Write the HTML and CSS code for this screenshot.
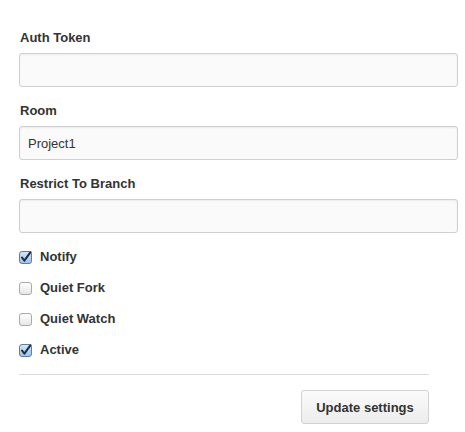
FILE: index.html
```html
<!DOCTYPE html>
<html>
<head>
<meta charset="utf-8">
<link rel="stylesheet" href="styles.css">
</head>
<body>
<form class="settings">
  <div class="field">
    <label class="field-label">Auth Token</label>
    <input class="text-input" type="text" value="">
  </div>
  <div class="field">
    <label class="field-label">Room</label>
    <input class="text-input" type="text" value="Project1">
  </div>
  <div class="field">
    <label class="field-label">Restrict To Branch</label>
    <input class="text-input" type="text" value="">
  </div>
  <div class="checks">
    <div class="check-row">
      <svg class="box" width="13" height="13" viewBox="0 0 13 13">
        <defs><linearGradient id="gb" x1="0" y1="0" x2="0" y2="1"><stop offset="0" stop-color="#d6e6f7"/><stop offset="1" stop-color="#9cc3ea"/></linearGradient></defs>
        <rect x="0.5" y="0.5" width="12" height="12" rx="2.5" fill="url(#gb)" stroke="#5e7fa3"/>
        <path d="M3 6.5 L5.4 9.6 L11.5 1.2" fill="none" stroke="#1e2b44" stroke-width="2" stroke-linecap="round" stroke-linejoin="round"/>
      </svg>
      <span class="check-label">Notify</span>
    </div>
    <div class="check-row">
      <svg class="box" width="13" height="13" viewBox="0 0 13 13">
        <defs><linearGradient id="gg" x1="0" y1="0" x2="0" y2="1"><stop offset="0" stop-color="#ffffff"/><stop offset="1" stop-color="#e6e6e6"/></linearGradient></defs>
        <rect x="0.5" y="0.5" width="12" height="12" rx="2.5" fill="url(#gg)" stroke="#a9a9a9"/>
      </svg>
      <span class="check-label">Quiet Fork</span>
    </div>
    <div class="check-row">
      <svg class="box" width="13" height="13" viewBox="0 0 13 13">
        <rect x="0.5" y="0.5" width="12" height="12" rx="2.5" fill="url(#gg)" stroke="#a9a9a9"/>
      </svg>
      <span class="check-label">Quiet Watch</span>
    </div>
    <div class="check-row">
      <svg class="box" width="13" height="13" viewBox="0 0 13 13">
        <rect x="0.5" y="0.5" width="12" height="12" rx="2.5" fill="url(#gb)" stroke="#5e7fa3"/>
        <path d="M3 6.5 L5.4 9.6 L11.5 1.2" fill="none" stroke="#1e2b44" stroke-width="2" stroke-linecap="round" stroke-linejoin="round"/>
      </svg>
      <span class="check-label">Active</span>
    </div>
  </div>
  <div class="actions">
    <button class="btn" type="button">Update settings</button>
  </div>
</form>
</body>
</html>
```

FILE: styles.css
```css
html, body {
  margin: 0;
  padding: 0;
  background: #ffffff;
}
body {
  font-family: "Liberation Sans", Arial, sans-serif;
  font-size: 13px;
  line-height: 18px;
  color: #333333;
}
.settings {
  padding: 29px 0 0 19px;
  width: 439px;
}
.field {
  display: flex;
  flex-direction: column;
  margin-bottom: 15px;
}
.field-label {
  display: block;
  font-weight: bold;
  padding-left: 1px;
  margin-bottom: 6px;
  color: #333;
}
.text-input {
  box-sizing: border-box;
  width: 439px;
  height: 34px;
  margin: 0;
  padding: 0 8px;
  border: 1px solid #cfcfcf;
  border-radius: 3px;
  background: #fafafa;
  box-shadow: inset 0 1px 2px rgba(0,0,0,0.06);
  font-family: "Liberation Sans", Arial, sans-serif;
  font-size: 13px;
  color: #333;
  outline: none;
}
.checks {
  display: flex;
  flex-direction: column;
  gap: 13px;
}
.check-row {
  display: flex;
  align-items: center;
  height: 18px;
}
.box {
  display: block;
  margin-top: 1px;
}
.check-label {
  margin-left: 8px;
  font-weight: bold;
  color: #333;
}
.actions {
  width: 410px;
  margin-top: 15px;
  border-top: 1px solid #dddddd;
  padding-top: 15px;
  display: flex;
  justify-content: flex-end;
}
.btn {
  box-sizing: border-box;
  width: 128px;
  height: 34px;
  margin: 0;
  border: 1px solid #d2d2d2;
  border-radius: 3px;
  background: linear-gradient(#fbfbfb, #ececec);
  font-family: "Liberation Sans", Arial, sans-serif;
  font-size: 13px;
  font-weight: bold;
  color: #333;
  padding: 0;
}
```
